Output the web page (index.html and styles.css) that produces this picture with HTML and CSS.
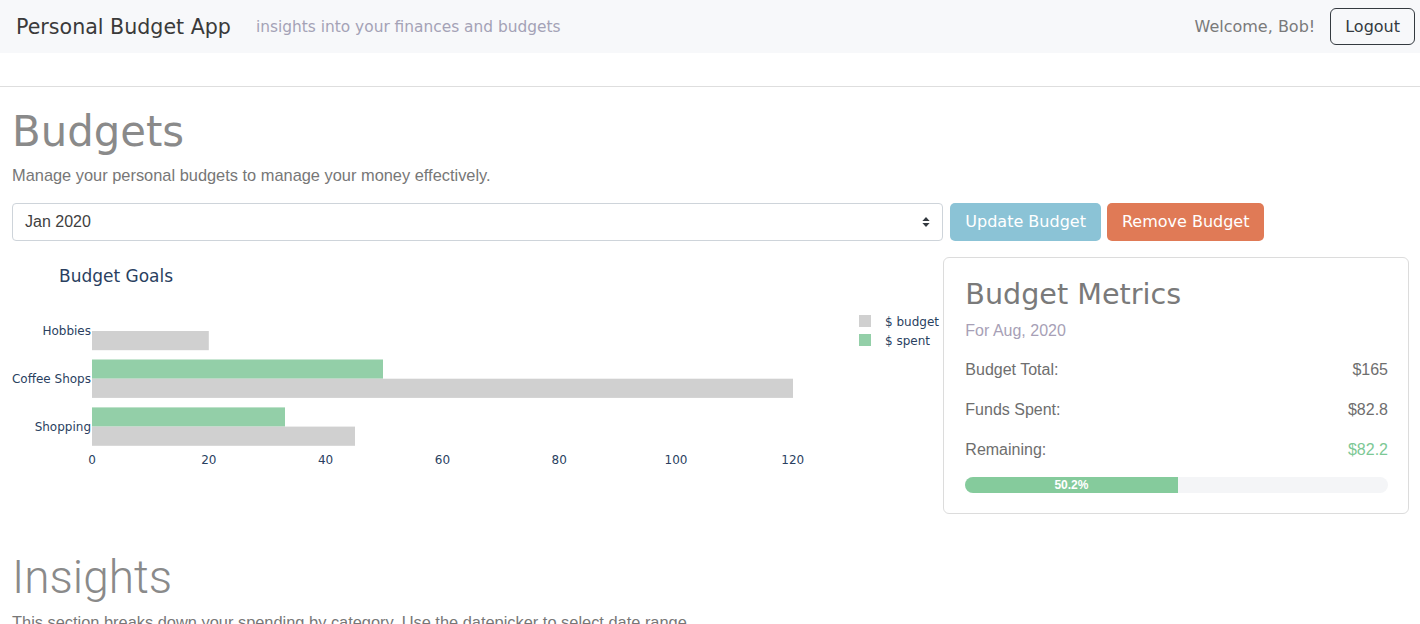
FILE: index.html
```html
<!DOCTYPE html>
<html lang="en">
<head>
<meta charset="utf-8">
<title>Personal Budget App</title>
<link rel="stylesheet" href="styles.css">
</head>
<body>
<nav class="navbar">
  <span class="brand">Personal Budget App</span>
  <span class="tagline">insights into your finances and budgets</span>
  <span class="welcome">Welcome, Bob!</span>
  <button class="btn-logout" type="button">Logout</button>
</nav>
<hr class="divider">
<main class="page">
  <h1 class="page-title">Budgets</h1>
  <p class="lead">Manage your personal budgets to manage your money effectively.</p>
  <div class="controls">
    <div class="select" role="listbox">
      <span class="select-value">Jan 2020</span>
      <svg class="select-arrows" width="8" height="10" viewBox="0 0 8 10" aria-hidden="true">
        <path d="M4 0 L7.6 4 L0.4 4 Z" fill="#343a40"/>
        <path d="M4 10 L7.6 6 L0.4 6 Z" fill="#343a40"/>
      </svg>
    </div>
    <div class="actions">
      <button class="btn btn-update" type="button">Update Budget</button>
      <button class="btn btn-remove" type="button">Remove Budget</button>
    </div>
  </div>
  <div class="overview">
    <div class="chart">
      <svg class="chart-svg" width="931" height="256" viewBox="0 0 931 256">
        <text class="chart-title" x="47" y="25">Budget Goals</text>
        <g class="bars">
          <rect x="80" y="74" width="116.8" height="19.2" fill="#d0d0d0"/>
          <rect x="80" y="102.5" width="291" height="19.2" fill="#93cfa8"/>
          <rect x="80" y="121.7" width="701" height="19.2" fill="#d0d0d0"/>
          <rect x="80" y="150.4" width="193" height="19.2" fill="#93cfa8"/>
          <rect x="80" y="169.6" width="263" height="19.2" fill="#d0d0d0"/>
        </g>
        <g class="ylabels">
          <text x="79" y="78">Hobbies</text>
          <text x="79" y="126">Coffee Shops</text>
          <text x="79" y="174">Shopping</text>
        </g>
        <g class="xlabels">
          <text x="80" y="207">0</text>
          <text x="196.8" y="207">20</text>
          <text x="313.6" y="207">40</text>
          <text x="430.4" y="207">60</text>
          <text x="547.2" y="207">80</text>
          <text x="664" y="207">100</text>
          <text x="780.8" y="207">120</text>
        </g>
        <g class="legend">
          <rect x="847" y="58" width="12" height="12" fill="#d0d0d0"/>
          <rect x="847" y="77" width="12" height="12" fill="#93cfa8"/>
          <text x="873" y="69">$ budget</text>
          <text x="873" y="88">$ spent</text>
        </g>
      </svg>
    </div>
    <section class="card">
      <h3 class="card-title">Budget Metrics</h3>
      <p class="card-subtitle">For Aug, 2020</p>
      <div class="metric"><span>Budget Total:</span><span>$165</span></div>
      <div class="metric"><span>Funds Spent:</span><span>$82.8</span></div>
      <div class="metric"><span>Remaining:</span><span class="positive">$82.2</span></div>
      <div class="progress">
        <div class="progress-bar" style="width: 50.2%">50.2%</div>
      </div>
    </section>
  </div>
  <h1 class="section-title">Insights</h1>
  <p class="lead">This section breaks down your spending by category. Use the datepicker to select date range.</p>
</main>
</body>
</html>
```

FILE: styles.css
```css
* { box-sizing: border-box; }

html, body {
  margin: 0;
  padding: 0;
  background: #ffffff;
}

body {
  font-family: "Liberation Sans", Arial, sans-serif;
  font-size: 16px;
  color: #666;
  overflow: hidden;
}

.navbar {
  height: 53px;
  background: #f7f8fa;
  display: flex;
  align-items: center;
  padding: 0 5px 0 16px;
  font-family: "DejaVu Sans", sans-serif;
}

.brand {
  font-size: 20.6px;
  line-height: 24px;
  color: #3a3a3a;
  margin-right: 25px;
}

.tagline {
  font-size: 15.4px;
  line-height: 20px;
  color: #a4a2b6;
}

.welcome {
  margin-left: auto;
  font-size: 16px;
  line-height: 20px;
  color: #7a7a7a;
  margin-right: 15px;
}

.btn-logout {
  height: 37px;
  padding: 0 14px;
  border: 1px solid #343a40;
  border-radius: 6px;
  background: transparent;
  font-family: "DejaVu Sans", sans-serif;
  font-size: 16px;
  line-height: 20px;
  color: #343a40;
}

.divider {
  margin: 33px 0 0;
  border: 0;
  border-top: 1px solid #dedede;
  height: 0;
}

.page {
  padding: 0 11px 0 12px;
}

.page-title {
  margin: 20px 0 0;
  font-family: "DejaVu Sans", sans-serif;
  font-weight: normal;
  font-size: 41.8px;
  line-height: 50px;
  color: #8a8a8a;
}

.lead {
  margin: 6px 0 0;
  font-size: 16.4px;
  line-height: 24px;
  color: #777;
}

.controls {
  margin-top: 16px;
  display: grid;
  grid-template-columns: 2fr 1fr;
}

.select {
  height: 38px;
  border: 1px solid #ced4da;
  border-radius: 4px;
  display: flex;
  align-items: center;
  justify-content: space-between;
  padding: 0 12px 0 12px;
  background: #fff;
}

.select-value {
  font-size: 16px;
  color: #3f3f3f;
}

.select-arrows {
  display: block;
}

.actions {
  display: flex;
  gap: 6px;
  padding-left: 7px;
}

.btn {
  height: 38px;
  padding: 0 15px;
  border: none;
  border-radius: 5px;
  font-family: "DejaVu Sans", sans-serif;
  font-size: 16px;
  line-height: 20px;
  color: #ffffff;
}

.btn-update { background: #8bc3d6; }
.btn-remove { background: #e07a56; }

.overview {
  margin-top: 16px;
  display: grid;
  grid-template-columns: 2fr 1fr;
  align-items: start;
}

.chart-svg {
  display: block;
  font-family: "DejaVu Sans", Verdana, sans-serif;
}

.chart-title {
  font-size: 17px;
  fill: #2a3f5f;
}

.ylabels text {
  font-size: 12px;
  fill: #2a3f5f;
  text-anchor: end;
}

.xlabels text {
  font-size: 12px;
  fill: #2a3f5f;
  text-anchor: middle;
}

.legend text {
  font-size: 12px;
  fill: #2a3f5f;
}

.card {
  border: 1px solid #dcdcdc;
  border-radius: 6px;
  padding: 19px 20px 20px 21px;
  background: #fff;
}

.card-title {
  margin: 0;
  font-family: "DejaVu Sans", sans-serif;
  font-weight: normal;
  font-size: 28.6px;
  line-height: 34px;
  color: #7a7a7a;
}

.card-subtitle {
  margin: 8px 0 0;
  font-size: 16px;
  line-height: 24px;
  color: #a79fb6;
}

.metric {
  display: flex;
  justify-content: space-between;
  font-size: 16px;
  line-height: 24px;
  color: #6e6e6e;
  margin-top: 16px;
}

.card-subtitle + .metric {
  margin-top: 15px;
}

.positive {
  color: #7cc895;
}

.progress {
  margin-top: 15px;
  height: 16px;
  border-radius: 8px;
  background: #f4f5f7;
  overflow: hidden;
  display: flex;
}

.progress-bar {
  background: #85cb9c;
  color: #fff;
  font-size: 12px;
  font-weight: bold;
  line-height: 16px;
  text-align: center;
}

.section-title {
  margin: 36px 0 0;
  font-family: Roboto, sans-serif;
  font-weight: 300;
  font-size: 46px;
  line-height: 54px;
  color: #8a8a8a;
}

.section-title + .lead {
  margin-top: 6px;
}
```
